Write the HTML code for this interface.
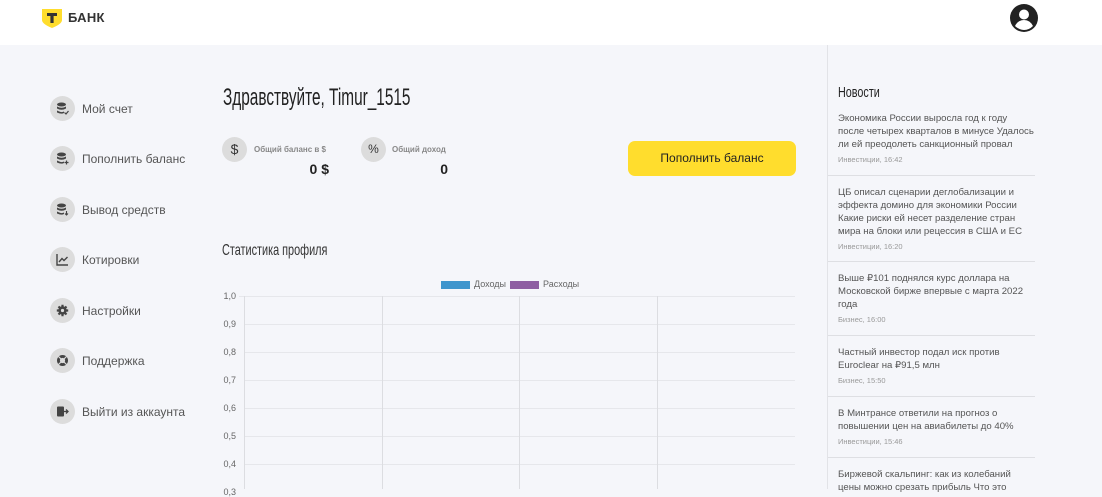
<!DOCTYPE html>
<html><head><meta charset="utf-8"><style>
*{margin:0;padding:0;box-sizing:border-box}
body{width:1102px;height:489px;overflow:hidden;background:#f5f6fa;font-family:"Liberation Sans",sans-serif;position:relative;color:#333}
.hdr{position:absolute;left:0;top:0;width:1102px;height:45px;background:#fff}
.a{position:absolute}
.mi{position:absolute;left:50px;height:25px;display:flex;align-items:center}
.mi .c{width:25px;height:25px;border-radius:50%;background:#dcdcdc;display:flex;align-items:center;justify-content:center}
.mi span{margin-left:7px;font-size:12px;color:#555}
.cond{display:inline-block;transform:scaleX(.72);transform-origin:left center;white-space:nowrap}
.news{position:absolute;left:838px;width:196px;font-size:9.6px;line-height:13px;color:#555}
.news .m{font-size:7.5px;color:#999;margin-top:2px}
.sep{position:absolute;left:828px;width:207px;height:1px;background:#dedfe3}
.gl{position:absolute;left:244px;width:551px;height:1px;background:#e6e7eb}
.vl{position:absolute;top:296px;width:1px;height:193px;background:#dcdde1}
.yl{position:absolute;left:222px;font-size:9px;color:#666;width:14px;text-align:right}
</style></head><body>
<div class="hdr"></div>
<svg class="a" style="left:42px;top:9px" width="22" height="20" viewBox="0 0 22 20"><path d="M0 0H20V11Q20 15 10 19Q0 15 0 11Z" fill="#ffdd2d"/><path d="M5 4H15V7H11.6V14H8.4V7H5Z" fill="#333"/></svg>
<div class="a" style="left:68px;top:10px;font-size:13px;font-weight:bold;color:#333;letter-spacing:.3px">БАНК</div>
<svg class="a" style="left:1010px;top:4px" width="28" height="28" viewBox="0 0 28 28"><circle cx="14" cy="14" r="14" fill="#222"/><circle cx="14" cy="10.5" r="5" fill="#fff"/><path d="M5 22Q8 16 14 16Q20 16 23 22Q19 26 14 26Q9 26 5 22Z" fill="#fff"/></svg>

<div class="a" style="left:827px;top:45px;width:1px;height:444px;background:#e2e3e7"></div>

<div class="mi" style="top:96px"><div class="c"><svg width="13" height="13" viewBox="0 0 13 13"><ellipse cx="5.5" cy="2.5" rx="4.5" ry="2" fill="#444"/><path d="M1 4.5Q5.5 7 10 4.5V6.5Q5.5 9 1 6.5ZM1 8.5Q5.5 11 8 9.5V11Q5.5 12.5 1 10.5Z" fill="#444"/><path d="M8.5 10.5L10 12L12.5 9" stroke="#444" fill="none" stroke-width="1.2"/></svg></div><span>Мой счет</span></div>
<div class="mi" style="top:146px"><div class="c"><svg width="13" height="13" viewBox="0 0 13 13"><ellipse cx="5.5" cy="2.5" rx="4.5" ry="2" fill="#444"/><path d="M1 4.5Q5.5 7 10 4.5V6.5Q5.5 9 1 6.5ZM1 8.5Q5.5 11 8 9.5V11Q5.5 12.5 1 10.5Z" fill="#444"/><path d="M10.5 8.5V12.5M8.5 10.5H12.5" stroke="#444" stroke-width="1.2"/></svg></div><span>Пополнить баланс</span></div>
<div class="mi" style="top:197px"><div class="c"><svg width="13" height="13" viewBox="0 0 13 13"><ellipse cx="5.5" cy="2.5" rx="4.5" ry="2" fill="#444"/><path d="M1 4.5Q5.5 7 10 4.5V6.5Q5.5 9 1 6.5ZM1 8.5Q5.5 11 8 9.5V11Q5.5 12.5 1 10.5Z" fill="#444"/><path d="M10.5 8V12M9 10.5L10.5 12L12 10.5" stroke="#444" fill="none" stroke-width="1.1"/></svg></div><span>Вывод средств</span></div>
<div class="mi" style="top:247px"><div class="c"><svg width="13" height="13" viewBox="0 0 13 13"><path d="M1 1V12H12" stroke="#444" fill="none" stroke-width="1.4"/><path d="M3 9L6 5.5L8 7.5L11.5 4" stroke="#444" fill="none" stroke-width="1.4"/></svg></div><span>Котировки</span></div>
<div class="mi" style="top:298px"><div class="c"><svg width="13" height="13" viewBox="0 0 13 13"><circle cx="6.5" cy="6.5" r="4.2" fill="#444"/><path d="M6.5 0.8V12.2M0.8 6.5H12.2M2.5 2.5L10.5 10.5M10.5 2.5L2.5 10.5" stroke="#444" stroke-width="2.2"/><circle cx="6.5" cy="6.5" r="1.6" fill="#dcdcdc"/></svg></div><span>Настройки</span></div>
<div class="mi" style="top:348px"><div class="c"><svg width="13" height="13" viewBox="0 0 13 13"><circle cx="6.5" cy="6.5" r="5.5" fill="#444"/><circle cx="6.5" cy="6.5" r="2.6" fill="#dcdcdc"/><path d="M2.5 2.5L10.5 10.5M10.5 2.5L2.5 10.5" stroke="#dcdcdc" stroke-width="1.2"/></svg></div><span>Поддержка</span></div>
<div class="mi" style="top:399px"><div class="c"><svg width="13" height="13" viewBox="0 0 13 13"><rect x="1" y="1.5" width="7" height="10" rx="1" fill="#444"/><path d="M7 6.5H12M10 4.5L12 6.5L10 8.5" stroke="#444" fill="none" stroke-width="1.3"/></svg></div><span>Выйти из аккаунта</span></div>

<div class="a" style="left:223px;top:84px;font-size:24px;color:#222"><span class="cond" style="transform:scaleX(.64)">Здравствуйте, Timur_1515</span></div>
<div class="a" style="left:222px;top:137px;width:25px;height:25px;border-radius:50%;background:#dcdcdc;font-size:14px;text-align:center;line-height:25px;color:#333">$</div>
<div class="a" style="left:254px;top:145px;font-size:8px;color:#888;font-weight:bold">Общий баланс в $</div>
<div class="a" style="left:280px;top:161px;width:49px;text-align:right;font-size:14px;color:#222;font-weight:bold">0 $</div>
<div class="a" style="left:361px;top:137px;width:25px;height:25px;border-radius:50%;background:#dcdcdc;font-size:12px;text-align:center;line-height:25px;color:#333">%</div>
<div class="a" style="left:392px;top:145px;font-size:8px;color:#888;font-weight:bold">Общий доход</div>
<div class="a" style="left:400px;top:161px;width:48px;text-align:right;font-size:14px;color:#222;font-weight:bold">0</div>
<div class="a" style="left:628px;top:141px;width:168px;height:35px;border-radius:7px;background:#ffdd2d;font-size:12px;text-align:center;line-height:35px;color:#222">Пополнить баланс</div>

<div class="a" style="left:222px;top:242px;font-size:16px;color:#333"><span class="cond" style="transform:scaleX(.68)">Статистика профиля</span></div>
<div class="a" style="left:441px;top:281px;width:29px;height:8px;background:#3e95cd"></div>
<div class="a" style="left:474px;top:279px;font-size:9px;color:#666">Доходы</div>
<div class="a" style="left:510px;top:281px;width:29px;height:8px;background:#8e5ea2"></div>
<div class="a" style="left:543px;top:279px;font-size:9px;color:#666">Расходы</div>
<div class="gl" style="top:296px;left:239px;width:556px"></div>
<div class="gl" style="top:324px"></div><div class="gl" style="top:352px"></div><div class="gl" style="top:380px"></div><div class="gl" style="top:408px"></div><div class="gl" style="top:436px"></div><div class="gl" style="top:464px"></div>
<div class="vl" style="left:244px"></div><div class="vl" style="left:382px"></div><div class="vl" style="left:519px"></div><div class="vl" style="left:657px"></div>
<div class="yl" style="top:291px">1,0</div><div class="yl" style="top:319px">0,9</div><div class="yl" style="top:347px">0,8</div><div class="yl" style="top:375px">0,7</div><div class="yl" style="top:403px">0,6</div><div class="yl" style="top:431px">0,5</div><div class="yl" style="top:459px">0,4</div><div class="yl" style="top:487px">0,3</div>

<div class="a" style="left:838px;top:84px;font-size:15px;color:#222"><span class="cond">Новости</span></div>
<div class="news" style="top:112px">Экономика России выросла год к году после четырех кварталов в минусе Удалось ли ей преодолеть санкционный провал<div class="m">Инвестиции, 16:42</div></div>
<div class="sep" style="top:175px"></div>
<div class="news" style="top:186px">ЦБ описал сценарии деглобализации и эффекта домино для экономики России Какие риски ей несет разделение стран мира на блоки или рецессия в США и ЕС<div class="m">Инвестиции, 16:20</div></div>
<div class="sep" style="top:261px"></div>
<div class="news" style="top:272px">Выше ₽101 поднялся курс доллара на Московской бирже впервые с марта 2022 года<div class="m">Бизнес, 16:00</div></div>
<div class="sep" style="top:335px"></div>
<div class="news" style="top:346px">Частный инвестор подал иск против Euroclear на ₽91,5 млн<div class="m">Бизнес, 15:50</div></div>
<div class="sep" style="top:396px"></div>
<div class="news" style="top:407px">В Минтрансе ответили на прогноз о повышении цен на авиабилеты до 40%<div class="m">Инвестиции, 15:46</div></div>
<div class="sep" style="top:457px"></div>
<div class="news" style="top:468px">Биржевой скальпинг: как из колебаний цены можно срезать прибыль Что это</div>
</body></html>
